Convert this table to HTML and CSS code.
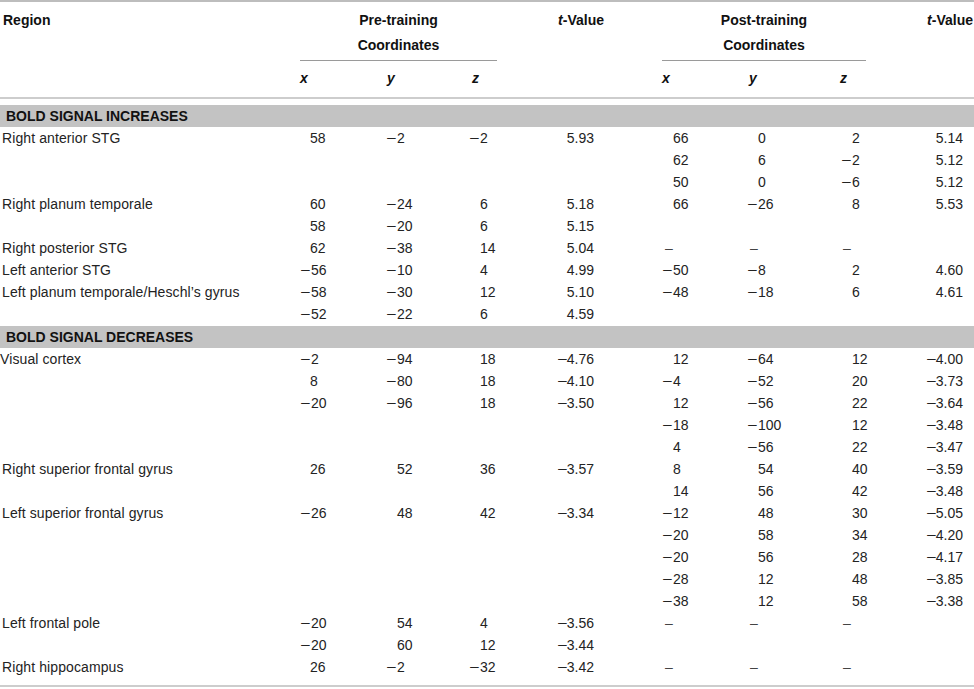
FILE: index.html
```html
<!DOCTYPE html>
<html lang="en">
<head>
<meta charset="utf-8">
<title>BOLD signal changes</title>
<link rel="stylesheet" href="styles.css">
</head>
<body>
<div class="table">
  <div class="head">
    <div class="h-region">Region</div>
    <div class="h-group h-pre">Pre-training<br>Coordinates</div>
    <div class="h-t h-tpre"><i>t</i>-Value</div>
    <div class="h-group h-post">Post-training<br>Coordinates</div>
    <div class="h-t h-tpost"><i>t</i>-Value</div>
    <div class="h-axis ax-px">x</div>
    <div class="h-axis ax-py">y</div>
    <div class="h-axis ax-pz">z</div>
    <div class="h-axis ax-qx">x</div>
    <div class="h-axis ax-qy">y</div>
    <div class="h-axis ax-qz">z</div>
  </div>

  <section class="group">
    <div class="band">BOLD SIGNAL INCREASES</div>
    <div class="row"><div class="rg">Right anterior STG</div><div class="px p">58</div><div class="py n"><span class="m">−</span>2</div><div class="pz n"><span class="m">−</span>2</div><div class="pt">5.93</div><div class="qx p">66</div><div class="qy p">0</div><div class="qz p">2</div><div class="qt">5.14</div></div>
    <div class="row"><div class="rg"></div><div></div><div></div><div></div><div></div><div class="qx p">62</div><div class="qy p">6</div><div class="qz n"><span class="m">−</span>2</div><div class="qt">5.12</div></div>
    <div class="row"><div class="rg"></div><div></div><div></div><div></div><div></div><div class="qx p">50</div><div class="qy p">0</div><div class="qz n"><span class="m">−</span>6</div><div class="qt">5.12</div></div>
    <div class="row"><div class="rg">Right planum temporale</div><div class="px p">60</div><div class="py n"><span class="m">−</span>24</div><div class="pz p">6</div><div class="pt">5.18</div><div class="qx p">66</div><div class="qy n"><span class="m">−</span>26</div><div class="qz p">8</div><div class="qt">5.53</div></div>
    <div class="row"><div class="rg"></div><div class="px p">58</div><div class="py n"><span class="m">−</span>20</div><div class="pz p">6</div><div class="pt">5.15</div><div></div><div></div><div></div><div></div></div>
    <div class="row"><div class="rg">Right posterior STG</div><div class="px p">62</div><div class="py n"><span class="m">−</span>38</div><div class="pz p">14</div><div class="pt">5.04</div><div class="qx d">–</div><div class="qy d">–</div><div class="qz d">–</div><div></div></div>
    <div class="row"><div class="rg">Left anterior STG</div><div class="px n"><span class="m">−</span>56</div><div class="py n"><span class="m">−</span>10</div><div class="pz p">4</div><div class="pt">4.99</div><div class="qx n"><span class="m">−</span>50</div><div class="qy n"><span class="m">−</span>8</div><div class="qz p">2</div><div class="qt">4.60</div></div>
    <div class="row"><div class="rg">Left planum temporale/Heschl’s gyrus</div><div class="px n"><span class="m">−</span>58</div><div class="py n"><span class="m">−</span>30</div><div class="pz p">12</div><div class="pt">5.10</div><div class="qx n"><span class="m">−</span>48</div><div class="qy n"><span class="m">−</span>18</div><div class="qz p">6</div><div class="qt">4.61</div></div>
    <div class="row"><div class="rg"></div><div class="px n"><span class="m">−</span>52</div><div class="py n"><span class="m">−</span>22</div><div class="pz p">6</div><div class="pt">4.59</div><div></div><div></div><div></div><div></div></div>
  </section>

  <section class="group">
    <div class="band">BOLD SIGNAL DECREASES</div>
    <div class="row"><div class="rg tight">Visual cortex</div><div class="px n"><span class="m">−</span>2</div><div class="py n"><span class="m">−</span>94</div><div class="pz p">18</div><div class="pt"><span class="m">−</span>4.76</div><div class="qx p">12</div><div class="qy n"><span class="m">−</span>64</div><div class="qz p">12</div><div class="qt"><span class="m">−</span>4.00</div></div>
    <div class="row"><div class="rg"></div><div class="px p">8</div><div class="py n"><span class="m">−</span>80</div><div class="pz p">18</div><div class="pt"><span class="m">−</span>4.10</div><div class="qx n"><span class="m">−</span>4</div><div class="qy n"><span class="m">−</span>52</div><div class="qz p">20</div><div class="qt"><span class="m">−</span>3.73</div></div>
    <div class="row"><div class="rg"></div><div class="px n"><span class="m">−</span>20</div><div class="py n"><span class="m">−</span>96</div><div class="pz p">18</div><div class="pt"><span class="m">−</span>3.50</div><div class="qx p">12</div><div class="qy n"><span class="m">−</span>56</div><div class="qz p">22</div><div class="qt"><span class="m">−</span>3.64</div></div>
    <div class="row"><div class="rg"></div><div></div><div></div><div></div><div></div><div class="qx n"><span class="m">−</span>18</div><div class="qy n"><span class="m">−</span>100</div><div class="qz p">12</div><div class="qt"><span class="m">−</span>3.48</div></div>
    <div class="row"><div class="rg"></div><div></div><div></div><div></div><div></div><div class="qx p">4</div><div class="qy n"><span class="m">−</span>56</div><div class="qz p">22</div><div class="qt"><span class="m">−</span>3.47</div></div>
    <div class="row"><div class="rg">Right superior frontal gyrus</div><div class="px p">26</div><div class="py p">52</div><div class="pz p">36</div><div class="pt"><span class="m">−</span>3.57</div><div class="qx p">8</div><div class="qy p">54</div><div class="qz p">40</div><div class="qt"><span class="m">−</span>3.59</div></div>
    <div class="row"><div class="rg"></div><div></div><div></div><div></div><div></div><div class="qx p">14</div><div class="qy p">56</div><div class="qz p">42</div><div class="qt"><span class="m">−</span>3.48</div></div>
    <div class="row"><div class="rg">Left superior frontal gyrus</div><div class="px n"><span class="m">−</span>26</div><div class="py p">48</div><div class="pz p">42</div><div class="pt"><span class="m">−</span>3.34</div><div class="qx n"><span class="m">−</span>12</div><div class="qy p">48</div><div class="qz p">30</div><div class="qt"><span class="m">−</span>5.05</div></div>
    <div class="row"><div class="rg"></div><div></div><div></div><div></div><div></div><div class="qx n"><span class="m">−</span>20</div><div class="qy p">58</div><div class="qz p">34</div><div class="qt"><span class="m">−</span>4.20</div></div>
    <div class="row"><div class="rg"></div><div></div><div></div><div></div><div></div><div class="qx n"><span class="m">−</span>20</div><div class="qy p">56</div><div class="qz p">28</div><div class="qt"><span class="m">−</span>4.17</div></div>
    <div class="row"><div class="rg"></div><div></div><div></div><div></div><div></div><div class="qx n"><span class="m">−</span>28</div><div class="qy p">12</div><div class="qz p">48</div><div class="qt"><span class="m">−</span>3.85</div></div>
    <div class="row"><div class="rg"></div><div></div><div></div><div></div><div></div><div class="qx n"><span class="m">−</span>38</div><div class="qy p">12</div><div class="qz p">58</div><div class="qt"><span class="m">−</span>3.38</div></div>
    <div class="row"><div class="rg">Left frontal pole</div><div class="px n"><span class="m">−</span>20</div><div class="py p">54</div><div class="pz p">4</div><div class="pt"><span class="m">−</span>3.56</div><div class="qx d">–</div><div class="qy d">–</div><div class="qz d">–</div><div></div></div>
    <div class="row"><div class="rg"></div><div class="px n"><span class="m">−</span>20</div><div class="py p">60</div><div class="pz p">12</div><div class="pt"><span class="m">−</span>3.44</div><div></div><div></div><div></div><div></div></div>
    <div class="row"><div class="rg">Right hippocampus</div><div class="px p">26</div><div class="py n"><span class="m">−</span>2</div><div class="pz n"><span class="m">−</span>32</div><div class="pt"><span class="m">−</span>3.42</div><div class="qx d">–</div><div class="qy d">–</div><div class="qz d">–</div><div></div></div>
  </section>
</div>
</body>
</html>
```

FILE: styles.css
```css
:root {
  --cols: 300px 77px 88px 55px 142px 85px 93px 40px 94px;
  --ma: 11px;
}

* {
  box-sizing: border-box;
}

body {
  margin: 0;
  background: #ffffff;
  font-family: "Liberation Sans", Arial, sans-serif;
  font-size: 14px;
  color: #232323;
}

.table {
  width: 974px;
  border-top: 2px solid #bdbdbd;
  border-bottom: 2px solid #cdcdcd;
  padding-bottom: 7px;
}

/* ---------- header ---------- */
.head {
  display: grid;
  grid-template-columns: var(--cols);
  grid-template-rows: auto auto;
  border-bottom: 2px solid #cdcdcd;
  margin-bottom: 6px;
  font-weight: bold;
  color: #111111;
}

.h-region {
  grid-column: 1;
  grid-row: 1 / 3;
  padding: 6px 0 0 3px;
  line-height: 25px;
}

.h-group {
  grid-row: 1;
  text-align: center;
  line-height: 25px;
  padding: 6px 0 2px;
  border-bottom: 1px solid #9a9a9a;
}

.h-pre {
  grid-column: 2 / 5;
  margin-right: 23px;
}

.h-post {
  grid-column: 6 / 9;
  margin-right: 14px;
}

.h-t {
  grid-row: 1;
  text-align: right;
  line-height: 25px;
  padding-top: 6px;
}

.h-tpre {
  grid-column: 5;
  padding-right: 58px;
}

.h-tpost {
  grid-column: 9;
  padding-right: 1px;
}

.h-axis {
  grid-row: 2;
  font-style: italic;
  line-height: 22px;
  padding-top: 6px;
  padding-bottom: 8px;
}

.ax-px { grid-column: 2; }
.ax-py { grid-column: 3; padding-left: 10px; }
.ax-pz { grid-column: 4; padding-left: 7px; }
.ax-qx { grid-column: 6; }
.ax-qy { grid-column: 7; padding-left: 2px; }
.ax-qz { grid-column: 8; }

/* ---------- body ---------- */
.group {
  margin-top: 1px;
}

.band {
  height: 22px;
  line-height: 22px;
  background: #c3c3c3;
  font-weight: bold;
  color: #111111;
  padding-left: 6px;
}

.row {
  display: grid;
  grid-template-columns: var(--cols);
  height: 22px;
  line-height: 22px;
  white-space: nowrap;
}

.rg {
  padding-left: 2px;
  letter-spacing: 0.1px;
}

.rg.tight {
  padding-left: 0;
}

/* digit start offset inside each coordinate column */
.px { --pp: 10px; }
.py { --pp: 20px; }
.pz { --pp: 15px; }
.qx { --pp: 11px; }
.qy { --pp: 11px; }
.qz { --pp: 12px; }

.p {
  padding-left: var(--pp);
}

.n {
  padding-left: calc(var(--pp) - var(--ma));
}

.pt,
.qt {
  --ma: 10px;
  text-align: right;
}

.pt { padding-right: 68px; }
.qt { padding-right: 11px; }

/* long typographic minus, hanging left of the digits */
.m {
  display: inline-block;
  transform: scaleX(1.25);
  transform-origin: 0 50%;
  margin-right: calc(var(--ma) - 0.584em);
}

.d {
  padding-left: 3px;
  color: #444444;
}
```
